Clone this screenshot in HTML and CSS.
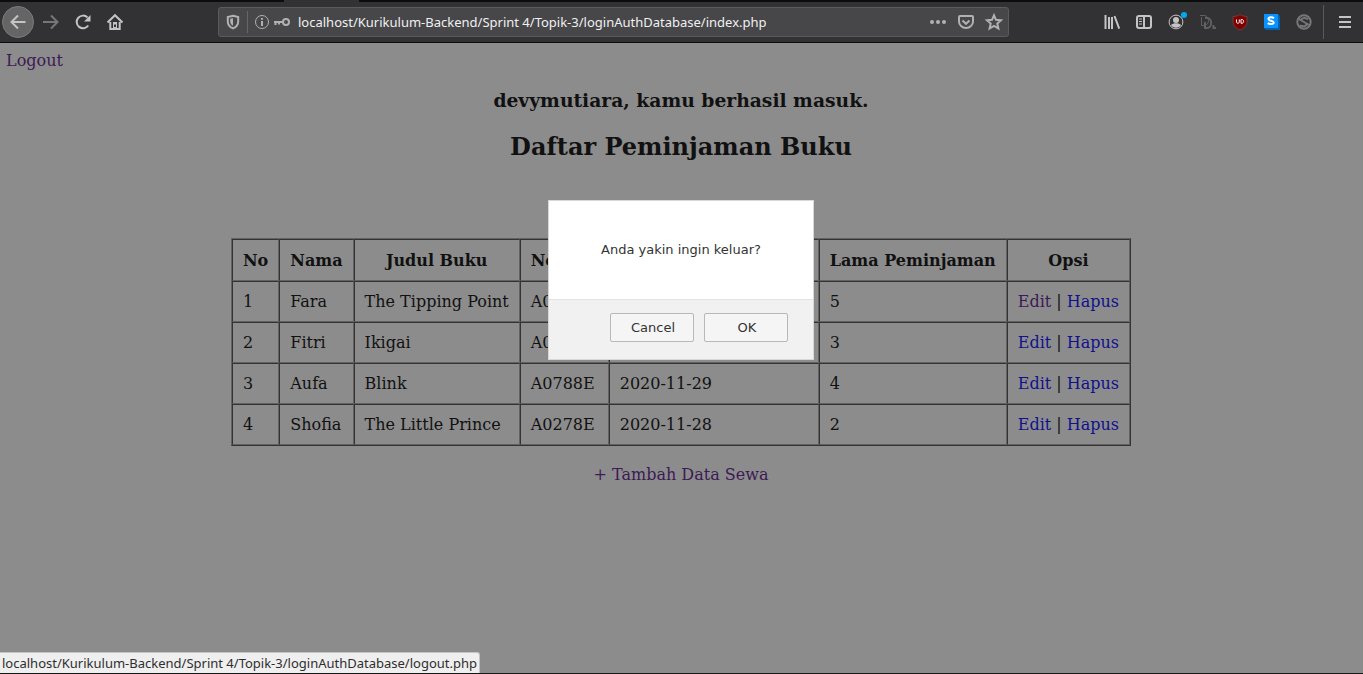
FILE: index.html
```html
<!DOCTYPE html>
<html lang="id">
<head>
<meta charset="utf-8">
<title>Daftar Peminjaman Buku</title>
<link rel="stylesheet" href="styles.css">
</head>
<body>
<div class="tabstrip"><span class="tab-active"></span></div>
<header class="toolbar">
  <nav class="tools" aria-label="Navigasi">
    <button class="tool tool-back" aria-label="Back"><svg viewBox="0 0 16 16"><path d="M15.500 8H1M8 1.500 1.500 8 8 14.500"/></svg></button>
    <button class="tool dim" aria-label="Forward"><svg viewBox="0 0 16 16"><path d="M0 8h15M8 1.500 14.500 8 8 14.500"/></svg></button>
    <button class="tool" aria-label="Reload"><svg viewBox="0 0 16 16"><path d="M13.200 11.500A6.300 6.300 0 1 1 12.500 3.500"/><path class="solid" d="M15.500 1v6.500H9z"/></svg></button>
    <button class="tool" aria-label="Home"><svg viewBox="0 0 16 16"><path d="M.500 8.500 8 1.200l7.500 7.300M3.300 8v7h9.400V8"/><path class="solid" d="M6 8h4v7H6z"/><path class="hole" d="M8 10.500v2.500"/></svg></button>
  </nav>
  <div class="urlbar">
    <svg class="ico shield" viewBox="0 0 16 16"><path d="M8 1.800 13.200 3v4.500c0 3.500-2.200 5.700-5.200 6.900-3-1.200-5.200-3.400-5.200-6.900V3z"/><path class="solid" d="M8 4.300v7.500C6.200 10.800 5.200 9.500 5.200 7.500V4.800z"/></svg>
    <span class="url-divider"></span>
    <svg class="ico info" viewBox="0 0 16 16"><circle cx="8" cy="8" r="6.500"/><path class="thick" d="M8 7v5M8 4v1.800"/></svg>
    <svg class="ico key" viewBox="0 0 16 16"><circle class="thick" cx="12" cy="8" r="3"/><path class="thick" d="M9 8H0M1.500 8v3M5 8v2.500"/></svg>
    <input class="url" type="text" aria-label="Alamat" value="localhost/Kurikulum-Backend/Sprint 4/Topik-3/loginAuthDatabase/index.php">
    <svg class="ico" viewBox="0 0 16 16"><g class="solid"><circle cx="2" cy="8" r="2"/><circle cx="8" cy="8" r="2"/><circle cx="14" cy="8" r="2"/></g></svg>
    <svg class="ico" viewBox="0 0 16 16"><path d="M2 2h12a1 1 0 0 1 1 1v4.500a7 6.500 0 0 1-14 0V3a1 1 0 0 1 1-1z"/><path d="m4.500 6.500 3.500 3.300 3.500-3.300"/></svg>
    <svg class="ico" viewBox="0 0 16 16"><path d="m8 1.300 2 4.500 5 .500-3.700 3.300 1.100 4.900L8 12l-4.400 2.500 1.100-4.900L1 6.300l5-.500z"/></svg>
  </div>
  <div class="tools">
    <button class="tool" aria-label="Library"><svg viewBox="0 0 16 16"><path d="M1.500 1v14M5 3v12M8 3v12M10.500 2l4.700 12.700"/></svg></button>
    <button class="tool" aria-label="Sidebar"><svg viewBox="0 0 16 16"><rect x="1" y="2" width="14" height="12" rx="2"/><path d="M8 2v12"/><path class="thin" d="M3 5h3M3 7.500h3M3 10h3"/></svg></button>
    <button class="tool" aria-label="Account"><svg viewBox="0 0 16 16"><circle class="thin" cx="8" cy="8" r="6.900"/><circle class="solid" cx="8" cy="6" r="3"/><path class="solid" d="M3 11C5 8.800 11 8.800 13 11 11 14.500 5 14.500 3 11z"/><circle class="dot" cx="16" cy="1" r="3"/></svg></button>
    <button class="tool faint" aria-label="Downloader"><svg viewBox="0 0 16 16"><path class="thin" d="M0 1.500h4c6 0 6 10 0 10H1.500V3"/><path d="M5 4h2c5.500 0 5.500 10 0 10H5V8"/><path class="thick" d="M13.500 11v3H16"/></svg></button>
    <button class="tool" aria-label="uBlock"><svg viewBox="0 0 16 16"><path class="red" d="M8 .500c2 1.300 4.500 2 7 2V8c0 4-3.500 6.500-7 8-3.500-1.500-7-4-7-8V2.500c2.500 0 5-.700 7-2z"/><path class="mark" d="M4.500 5.500v2.300c0 2 2.800 2 2.800 0V5.500M9 5.500h.800c2.400 0 2.400 3.800 0 3.800H9z"/></svg></button>
    <button class="tool" aria-label="Stylus"><svg viewBox="0 0 16 16"><path class="blue-dark" d="M0 14 2 16h14V2l-2-2z"/><path class="blue" d="M0 0h14v14H0z"/><path class="ess" d="M10 4.200C8.500 3 4.500 2.800 4.500 4.900s5.200 1.600 5.200 3.600-4 2-6 .700"/></svg></button>
    <button class="tool dim" aria-label="NoScript"><svg viewBox="0 0 16 16"><circle class="thick" cx="8" cy="8" r="6.700"/><path class="thick" d="M2 4.500l12 7M12 5.500C9 3 5 4 5.500 6.500M4 11.500c4 1.500 7 .500 6.500-2"/></svg></button>
    <span class="tool-divider"></span>
    <button class="tool menu" aria-label="Menu"><svg viewBox="0 0 16 16"><path d="M2 3h12M2 8h12M2 13h12"/></svg></button>
  </div>
</header>

<main class="page">
  <a class="logout visited" href="logout.php">Logout</a>
  <h3 class="greeting">devymutiara, kamu berhasil masuk.</h3>
  <h2 class="title">Daftar Peminjaman Buku</h2>
  <table class="loans">
    <thead>
      <tr><th>No</th><th>Nama</th><th>Judul Buku</th><th class="code">No</th><th class="date"></th><th>Lama Peminjaman</th><th>Opsi</th></tr>
    </thead>
    <tbody>
      <tr><td>1</td><td>Fara</td><td>The Tipping Point</td><td>A0</td><td></td><td>5</td><td><a class="visited" href="edit.php">Edit</a> | <a href="hapus.php">Hapus</a></td></tr>
      <tr><td>2</td><td>Fitri</td><td>Ikigai</td><td>A0</td><td></td><td>3</td><td><a href="edit.php">Edit</a> | <a href="hapus.php">Hapus</a></td></tr>
      <tr><td>3</td><td>Aufa</td><td>Blink</td><td>A0788E</td><td>2020-11-29</td><td>4</td><td><a href="edit.php">Edit</a> | <a href="hapus.php">Hapus</a></td></tr>
      <tr><td>4</td><td>Shofia</td><td>The Little Prince</td><td>A0278E</td><td>2020-11-28</td><td>2</td><td><a href="edit.php">Edit</a> | <a href="hapus.php">Hapus</a></td></tr>
    </tbody>
  </table>
  <a class="add visited" href="tambah.php">+ Tambah Data Sewa</a>

  <div class="overlay">
    <div class="dialog" role="alertdialog" aria-labelledby="ask">
      <p class="message" id="ask">Anda yakin ingin keluar?</p>
      <div class="actions">
        <button class="btn">Cancel</button>
        <button class="btn">OK</button>
      </div>
    </div>
  </div>
  <div class="status">localhost/Kurikulum-Backend/Sprint 4/Topik-3/loginAuthDatabase/logout.php</div>
</main>
</body>
</html>
```
FILE: styles.css
```css
* { box-sizing: border-box; }
body {
  margin: 0;
  min-height: 100vh;
  display: flex;
  flex-direction: column;
  background: #8c8c8c;
  color: #111;
  font: 16px/19px "DejaVu Serif", serif;
}

/* Browser chrome */
.tabstrip { height: 2px; background: #0c0c0d; display: flex; padding-left: 284px; }
.tab-active { width: 75px; background: #323234; }
.toolbar {
  height: 41px;
  display: flex;
  align-items: center;
  padding: 0 2px;
  background: #323234;
  border-bottom: 1px solid #0c0c0d;
}
.tools { display: flex; align-items: center; }
.tool {
  width: 32px;
  height: 32px;
  padding: 0;
  display: grid;
  place-items: center;
  border: 0;
  background: none;
  color: #c4c4c5;
}
.tool-back { border: 1px solid #7b7b7b; border-radius: 50%; background: #656565; margin-right: 1px; }
.dim { color: #777778; }
.faint { color: #606062; }
.tool-divider { width: 1px; height: 34px; margin: 0 5px 0 3px; background: #5a5a5c; }
svg { width: 16px; height: 16px; fill: none; stroke: currentColor; stroke-width: 2; overflow: visible; }
svg .solid { fill: currentColor; stroke: none; }
svg .hole { stroke: #323234; stroke-width: 2; }
svg .thin { stroke-width: 1; }
svg .thick { stroke-width: 2; }
svg .dot { fill: #00a9f0; stroke: none; }
svg .red { fill: #800000; stroke: #6b4040; stroke-width: 1; }
svg .mark { stroke: #fff; stroke-width: 1; }
svg .blue { fill: #0a93ff; stroke: none; }
svg .blue-dark { fill: #0660a8; stroke: none; }
svg .ess { stroke: #fff; stroke-width: 2; }
.urlbar {
  flex: 1;
  min-width: 0;
  height: 30px;
  margin: 0 87px;
  padding: 0 6px;
  display: flex;
  align-items: center;
  background: #474749;
  border: 1px solid #5b5b5d;
  border-radius: 3px;
  color: #b1b1b3;
}
.ico { flex: none; margin-left: 12px; }
.shield, .key { margin-left: 0; }
.info { margin: 0 4px 0 6px; stroke-width: 1; }
.url-divider { width: 1px; height: 22px; margin-left: 6px; background: #66666a; }
.url {
  flex: 1;
  min-width: 0;
  margin-left: 8px;
  padding: 0;
  border: 0;
  background: none;
  color: #f0f0f2;
  font: 13px/20px "Noto Sans", "Open Sans", sans-serif;
}

/* Page */
.page {
  flex: 1;
  position: relative;
  display: flex;
  flex-direction: column;
  align-items: center;
  padding: 8px 1px 0 0;
  border-bottom: 1px solid #161616;
}
a { color: #11118c; text-decoration: none; }
a.visited { color: #3c1a55; }
.logout { align-self: flex-start; margin-left: 6px; }
.greeting { margin: 19px 0 0; line-height: 22px; }
.title { margin: 21px 0 0; font-size: 24px; line-height: 29px; }
.loans {
  margin: 77px 0 19px;
  border: 1px solid;
  border-color: #626262 #333 #333 #626262;
  border-spacing: 0;
}
.loans th, .loans td {
  padding: 10px;
  border: 1px solid;
  border-color: #333 #626262 #626262 #333;
  text-align: left;
  white-space: nowrap;
}
.loans th { padding-top: 11px; text-align: center; }
.loans .code { width: 89px; text-align: left; }
.loans .date { width: 210px; }

/* Confirmation dialog */
.overlay {
  position: absolute;
  inset: 0;
  display: flex;
  justify-content: center;
  align-items: flex-start;
  padding: 157px 1px 0 0;
}
.dialog {
  width: 266px;
  background: #fff;
  border: 1px solid #d8d8d8;
  color: #333;
  font: 13px/18px "DejaVu Sans", sans-serif;
}
.message { margin: 0; padding: 40px 0; text-align: center; }
.actions {
  display: flex;
  justify-content: flex-end;
  gap: 10px;
  padding: 13px 25px 17px;
  background: #f1f1f1;
  border-top: 1px solid #e2e2e2;
}
.btn {
  width: 84px;
  height: 29px;
  padding: 0 0 0 2px;
  background: #f5f5f5;
  border: 1px solid #b8b8b8;
  border-radius: 2px;
  color: #333;
  font: inherit;
}
.status {
  position: absolute;
  left: 0;
  bottom: 0;
  padding: 0 2px;
  background: #efefef;
  border: solid #c4c4c4;
  border-width: 1px 1px 0 0;
  border-radius: 0 3px 0 0;
  color: #2e2e2e;
  font: 13px/20px "Noto Sans", "Open Sans", sans-serif;
}
```
